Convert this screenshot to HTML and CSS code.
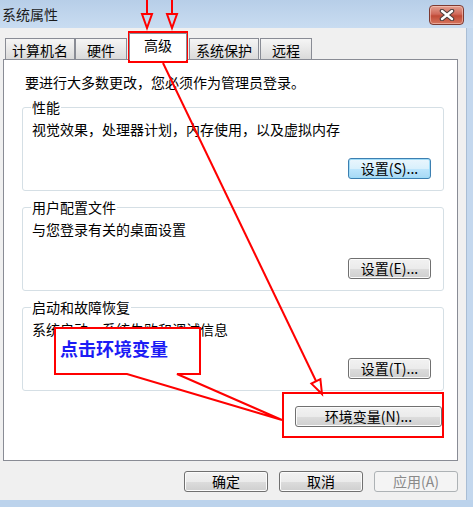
FILE: index.html
```html
<!DOCTYPE html>
<html lang="zh-CN">
<head>
    <meta charset="UTF-8">
    <title>系统属性</title>
    <link rel="stylesheet" href="styles.css">
</head>
<body>

    <div class="window">
        <div class="titlebar">
            <span class="title">系统属性</span>
            <button class="close-btn">
                <svg width="16" height="12" viewBox="0 0 16 12">
                    <path d="M3 2 L13 10 M13 2 L3 10" stroke="#4b3c3a" stroke-width="4.5" stroke-linecap="round"/>
                    <path d="M3 2 L13 10 M13 2 L3 10" stroke="#fff" stroke-width="2.4" stroke-linecap="round"/>
                </svg>
            </button>
        </div>

        <div class="frame">
            <div class="client">
                <div class="tabs">
                    <div class="tab">计算机名</div>
                    <div class="tab short">硬件</div>
                    <div class="tab active">高级</div>
                    <div class="tab">系统保护</div>
                    <div class="tab short">远程</div>
                </div>

                <div class="panel">
                    <p class="note">要进行大多数更改，您必须作为管理员登录。</p>

                    <fieldset class="group">
                        <legend>性能</legend>
                        <p class="group-text">视觉效果，处理器计划，内存使用，以及虚拟内存</p>
                        <div class="group-actions">
                            <button class="btn default">设置(S)...</button>
                        </div>
                    </fieldset>

                    <fieldset class="group">
                        <legend>用户配置文件</legend>
                        <p class="group-text">与您登录有关的桌面设置</p>
                        <div class="group-actions">
                            <button class="btn">设置(E)...</button>
                        </div>
                    </fieldset>

                    <fieldset class="group">
                        <legend>启动和故障恢复</legend>
                        <p class="group-text">系统启动，系统失败和调试信息</p>
                        <div class="group-actions">
                            <button class="btn">设置(T)...</button>
                        </div>
                    </fieldset>

                    <div class="env-row">
                        <button class="btn env-btn">环境变量(N)...</button>
                    </div>
                </div>

                <div class="dialog-actions">
                    <button class="btn">确定</button>
                    <button class="btn">取消</button>
                    <button class="btn" disabled>应用(A)</button>
                </div>
            </div>
            <div class="frame-right"></div>
        </div>
        <div class="frame-bottom"></div>

        <!-- red annotations drawn on top of the dialog -->
        <svg class="annotations" width="473" height="507" viewBox="0 0 473 507">
            <g stroke="#ff0000" stroke-width="2" fill="none">
                <line x1="147" y1="0" x2="147" y2="14"/>
                <polygon points="142,14 152,14 147,28"/>
                <line x1="172" y1="0" x2="172" y2="14"/>
                <polygon points="167,14 177,14 172,28"/>
                <rect x="129" y="32" width="58" height="30"/>
                <line x1="163" y1="63" x2="316" y2="381"/>
                <polygon points="320.4,379.2 311.4,383.6 322,394"/>
                <rect x="283" y="393" width="160" height="44"/>
                <path d="M55 328 H200 V374 H177 L282 420 L127 374 H55 Z" fill="#fff"/>
            </g>
            <text class="callout-text" x="60" y="356">点击环境变量</text>
        </svg>
    </div>

</body>
</html>
```

FILE: styles.css
```css
/* Base styling */
body {
    margin: 0;
    padding: 0;
    font-family: "Noto Sans CJK SC", sans-serif;
    font-size: 14px;
    color: #000;
}

.window {
    position: relative;
    width: 473px;
    height: 507px;
    display: flex;
    flex-direction: column;
    overflow: hidden;
}

.titlebar {
    height: 28px;
    flex-shrink: 0;
    display: flex;
    justify-content: space-between;
    align-items: flex-start;
    padding: 0 9px 0 2px;
    box-sizing: border-box;
    background: linear-gradient(#b7cee8, #c9dcf1);
}

.title {
    margin-top: 6px;
    line-height: 16px;
    color: #1b1b1b;
}

.close-btn {
    width: 35px;
    height: 20px;
    margin-top: 5px;
    padding: 0;
    display: flex;
    align-items: center;
    justify-content: center;
    border: 1px solid #7d3a31;
    border-radius: 4px;
    background: linear-gradient(#e3a090, #d0695a 45%, #c04a36 55%, #d6765f);
    box-shadow: inset 0 0 0 1px rgba(255, 220, 210, 0.5);
}

.frame {
    flex: 1;
    display: flex;
}

.client {
    flex: 1;
    display: flex;
    flex-direction: column;
    padding: 5px 8px 0 3px;
    background-color: #f0f0f0;
}

.frame-right {
    width: 6px;
    background-color: #c4d8ee;
    border-left: 1px solid #a9bdd4;
}

.frame-bottom {
    height: 7px;
    flex-shrink: 0;
    background-color: #bcd3ec;
}

/* Tabs */
.tabs {
    position: relative;
    z-index: 1;
    height: 26px;
    display: flex;
    align-items: flex-end;
    padding-left: 2px;
}

.tab {
    height: 21px;
    padding: 1px 6px 0;
    box-sizing: border-box;
    line-height: 20px;
    border: 1px solid #898c95;
    border-bottom: none;
    background: linear-gradient(#f5f5f5, #e8e8e8 50%, #dadada);
}

.tab.short {
    padding: 1px 11px 0;
}

.tab:last-child {
    margin-left: 1px;
}

.tab.active {
    height: 27px;
    margin: 0 2px -1px;
    padding: 0 14px;
    line-height: 22px;
    background: #fff;
}

/* Tab page */
.panel {
    height: 402px;
    box-sizing: border-box;
    padding: 13px 13px 0 18px;
    border: 1px solid #898c95;
    background-color: #fff;
}

.note {
    margin: 0 0 8px 3px;
    line-height: 18px;
}

.group {
    margin: 0 0 8px;
    padding: 5px 12px 11px 9px;
    min-width: 0;
    border: 1px solid #d5dfe5;
    border-radius: 3px;
}

.group legend {
    padding: 0 1px;
    margin-left: -1px;
    line-height: 16px;
}

.group-text {
    margin: 0 0 20px;
    line-height: 18px;
}

.group-actions {
    display: flex;
    justify-content: flex-end;
}

.env-row {
    display: flex;
    justify-content: flex-end;
    margin: 15px 2px 0 0;
}

/* Buttons */
.btn {
    width: 83px;
    height: 21px;
    padding: 0;
    font-family: inherit;
    font-size: 14px;
    line-height: 19px;
    color: #000;
    border: 1px solid #707070;
    border-radius: 3px;
    background: linear-gradient(#f2f2f2, #ebebeb 50%, #dddddd 50%, #cfcfcf);
    box-shadow: inset 0 0 0 1px #fbfbfb;
}

.btn.default {
    border-color: #3c7fb1;
    background: linear-gradient(#eaf6fd, #d9f0fc 50%, #bee6fd 50%, #a7d9f5);
    box-shadow: inset 0 0 0 1px #9fdcf8;
}

.btn:disabled {
    color: #8a8a8a;
    border-color: #adb2b5;
    background: #f4f4f4;
    box-shadow: none;
}

.env-btn {
    width: 147px;
}

.dialog-actions {
    display: flex;
    justify-content: flex-end;
    gap: 11px;
    margin-top: 10px;
}

.dialog-actions .btn {
    width: 84px;
}

/* Annotations */
.annotations {
    position: absolute;
    top: 0;
    left: 0;
    pointer-events: none;
}

.callout-text {
    font-family: "Noto Sans CJK SC", sans-serif;
    font-size: 18px;
    font-weight: bold;
    fill: #1c1cf5;
}
```
